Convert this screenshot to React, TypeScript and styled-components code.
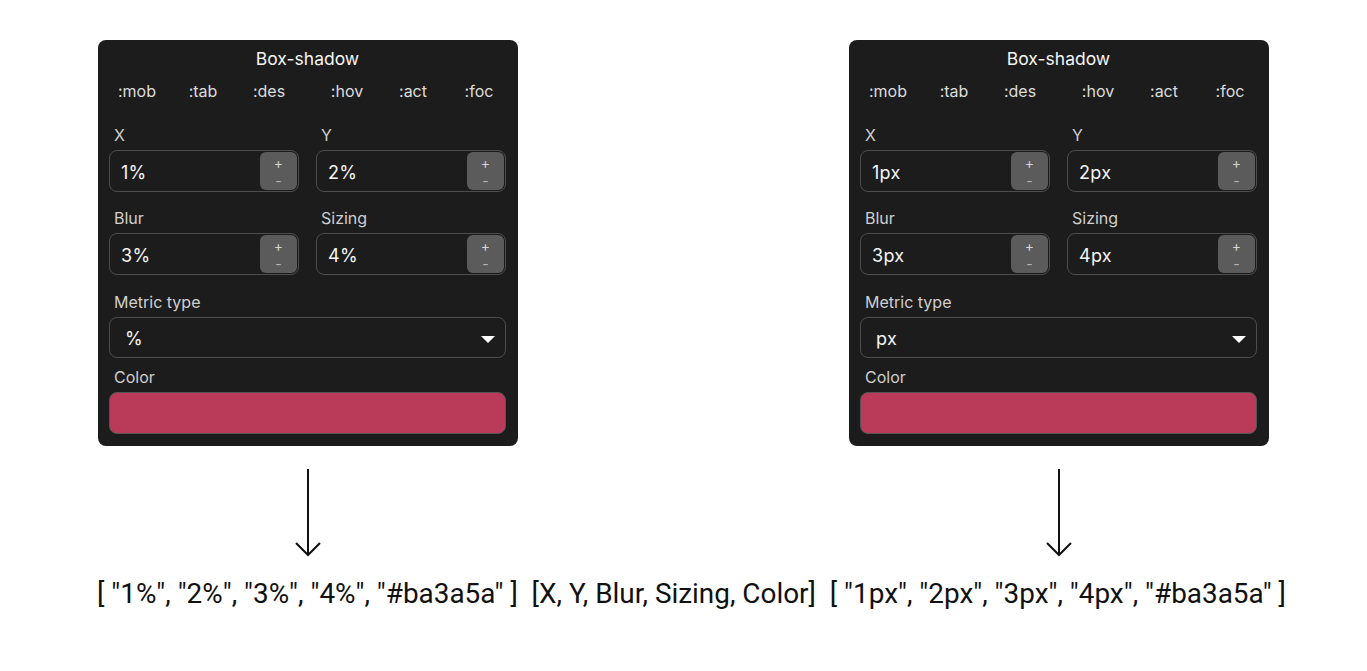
import React from "react";
import styled, { createGlobalStyle } from "styled-components";

const Global = createGlobalStyle`
  html, body { margin: 0; padding: 0; background: #ffffff; }
  body { font-family: Inter, "Noto Sans", sans-serif; }
`;

const Page = styled.div`
  width: 1367px;
  height: 671px;
  display: flex;
  flex-direction: column;
  padding-top: 40px;
  box-sizing: border-box;
`;

const Row = styled.div`
  display: flex;
  justify-content: space-between;
  padding: 0 98px;
`;

const Column = styled.div`
  display: flex;
  flex-direction: column;
  align-items: center;
`;

const Panel = styled.div`
  width: 420px;
  box-sizing: border-box;
  background: #1c1c1c;
  border-radius: 8px;
  padding: 8px 12px 12px 11px;
  display: flex;
  flex-direction: column;
  color: #f2f2f2;
  font-family: Inter, "Noto Sans", sans-serif;
`;

const Title = styled.div`
  text-align: center;
  font-size: 17.5px;
  line-height: 22px;
  color: #f4f4f4;
`;

const Tabs = styled.div`
  margin: 10px -6px 0 -5px;
  display: flex;
  justify-content: center;
  gap: 12px;
`;

const TabGroup = styled.div`
  display: grid;
  grid-template-columns: repeat(3, 66px);
`;

const Tab = styled.span`
  text-align: center;
  font-size: 16px;
  line-height: 22px;
  color: #dcdcdc;
`;

const Grid = styled.div<{ $top: number }>`
  margin-top: ${(p) => p.$top}px;
  display: grid;
  grid-template-columns: 190px 190px;
  column-gap: 17px;
`;

const Field = styled.div<{ $top?: number }>`
  display: flex;
  flex-direction: column;
  margin-top: ${(p) => p.$top ?? 0}px;
`;

const Label = styled.div`
  font-size: 16px;
  line-height: 22px;
  color: #cfcfcf;
  padding-left: 5px;
  margin-bottom: 4px;
`;

const InputBox = styled.div`
  height: 42px;
  box-sizing: border-box;
  border: 1px solid #4d4d4d;
  border-radius: 8px;
  display: flex;
  align-items: center;
  justify-content: space-between;
  padding: 1px 1px 1px 11px;
`;

const Value = styled.span`
  font-size: 18px;
  letter-spacing: 0.3px;
  color: #f4f4f4;
  padding-top: 2px;
`;

const Stepper = styled.div`
  width: 37px;
  height: 38px;
  background: #5b5b5b;
  border-radius: 6px;
  display: flex;
  flex-direction: column;
  align-items: center;
  justify-content: center;
  gap: 1px;
`;

const Sign = styled.span<{ $dim?: boolean }>`
  display: block;
  height: 17px;
  font-size: 14px;
  line-height: 17px;
  font-weight: 400;
  color: ${(p) => (p.$dim ? "#b4b4b4" : "#d4d4d4")};
`;

const Select = styled.div`
  height: 41px;
  box-sizing: border-box;
  border: 1px solid #4d4d4d;
  border-radius: 8px;
  display: flex;
  align-items: center;
  justify-content: space-between;
  padding: 0 10px 0 15px;
`;

const Caret = styled.span`
  width: 0;
  height: 0;
  border-left: 7px solid transparent;
  border-right: 7px solid transparent;
  border-top: 7px solid #ffffff;
  margin-top: 4px;
`;

const Swatch = styled.div<{ $color: string }>`
  height: 42px;
  box-sizing: border-box;
  border: 1px solid #555;
  border-radius: 8px;
  background: ${(p) => p.$color};
`;

const ArrowWrap = styled.div`
  margin-top: 23px;
  height: 88px;
`;

const Output = styled.div`
  margin-top: 20px;
  padding-left: 97px;
  font-family: Roboto, "Liberation Sans", sans-serif;
  font-size: 27.9px;
  line-height: 34px;
  color: #111;
  white-space: pre;
`;

const NumberInput = ({ label, value }: { label: string; value: string }) => (
  <Field>
    <Label>{label}</Label>
    <InputBox>
      <Value>{value}</Value>
      <Stepper>
        <Sign>+</Sign>
        <Sign $dim>-</Sign>
      </Stepper>
    </InputBox>
  </Field>
);

const DownArrow = () => (
  <svg width="30" height="88" viewBox="0 0 30 88">
    <line x1="15" y1="0" x2="15" y2="86" stroke="#111" strokeWidth="2" />
    <polyline points="3,74 15,86 27,74" fill="none" stroke="#111" strokeWidth="2" />
  </svg>
);

const ShadowPanel = ({ unit }: { unit: string }) => (
  <Panel>
    <Title>Box-shadow</Title>
    <Tabs>
      <TabGroup>
        <Tab>:mob</Tab>
        <Tab>:tab</Tab>
        <Tab>:des</Tab>
      </TabGroup>
      <TabGroup>
        <Tab>:hov</Tab>
        <Tab>:act</Tab>
        <Tab>:foc</Tab>
      </TabGroup>
    </Tabs>
    <Grid $top={22}>
      <NumberInput label="X" value={`1${unit}`} />
      <NumberInput label="Y" value={`2${unit}`} />
    </Grid>
    <Grid $top={15}>
      <NumberInput label="Blur" value={`3${unit}`} />
      <NumberInput label="Sizing" value={`4${unit}`} />
    </Grid>
    <Field $top={16}>
      <Label>Metric type</Label>
      <Select>
        <Value>{unit}</Value>
        <Caret />
      </Select>
    </Field>
    <Field $top={8}>
      <Label>Color</Label>
      <Swatch $color="#ba3a5a" />
    </Field>
  </Panel>
);

export default function App() {
  return (
    <Page>
      <Global />
      <Row>
        <Column>
          <ShadowPanel unit="%" />
          <ArrowWrap>
            <DownArrow />
          </ArrowWrap>
        </Column>
        <Column>
          <ShadowPanel unit="px" />
          <ArrowWrap>
            <DownArrow />
          </ArrowWrap>
        </Column>
      </Row>
      <Output>
        {'[ "1%", "2%", "3%", "4%", "#ba3a5a" ]  [X, Y, Blur, Sizing, Color]  [ "1px", "2px", "3px", "4px", "#ba3a5a" ]'}
      </Output>
    </Page>
  );
}
